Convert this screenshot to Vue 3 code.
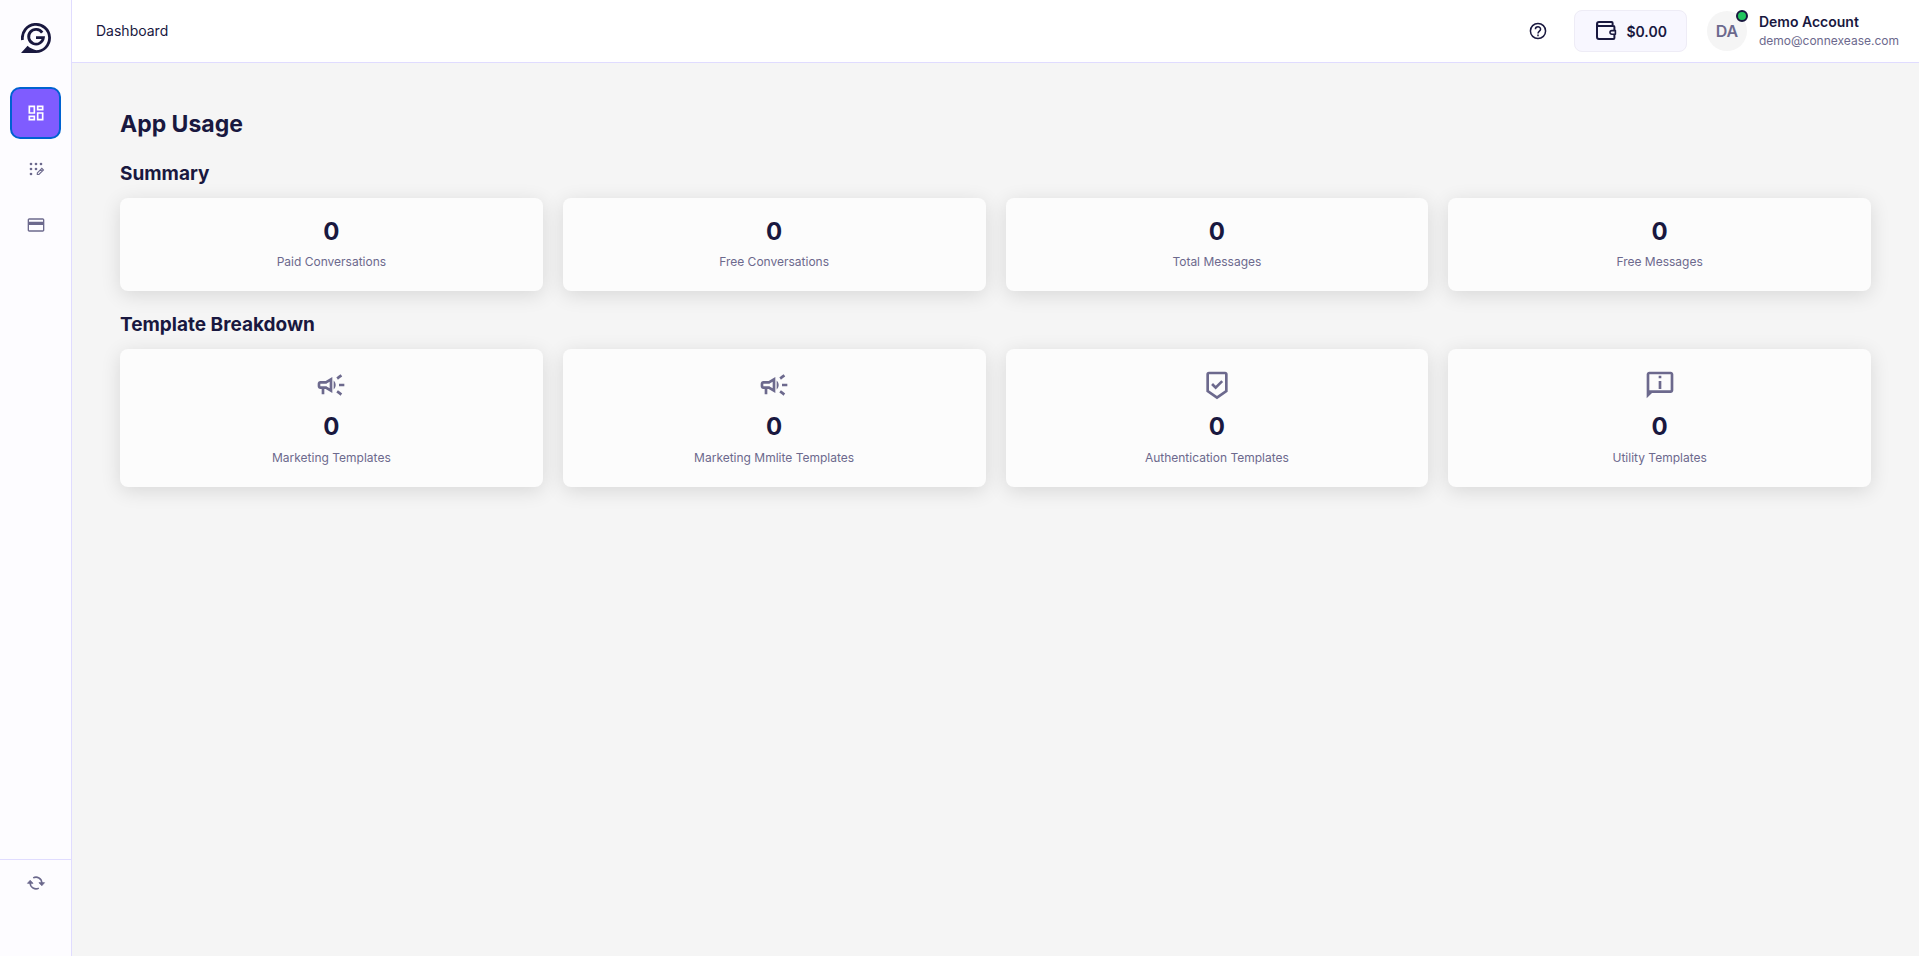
<script setup>
import { ref } from 'vue'

const active = ref('dashboard')

const user = {
  name: 'Demo Account',
  email: 'demo@connexease.com',
  initials: 'DA',
  balance: 0,
}

const summary = ref([
  { label: 'Paid Conversations', value: 0 },
  { label: 'Free Conversations', value: 0 },
  { label: 'Total Messages', value: 0 },
  { label: 'Free Messages', value: 0 },
])

const templates = ref([
  { label: 'Marketing Templates', value: 0, icon: 'campaign' },
  { label: 'Marketing Mmlite Templates', value: 0, icon: 'campaign' },
  { label: 'Authentication Templates', value: 0, icon: 'badge' },
  { label: 'Utility Templates', value: 0, icon: 'info' },
])
</script>

<template>
  <div class="layout">
    <aside class="sidebar">
      <a href="#" class="logo" aria-label="Home">
        <svg viewBox="0 0 30 30" width="30" height="30">
          <path d="M1.5 17A13.6 13.6 0 1 1 15 28.6H8" fill="none" stroke="currentColor" stroke-width="2.8" />
          <path d="M0 30l6.6-7.2c2 2 4.6 3.4 8.4 4.4V30z" fill="currentColor" />
          <path d="M21.2 9.6A7.4 7.4 0 1 0 22.4 14.6H15" fill="none" stroke="currentColor" stroke-width="2.8" />
        </svg>
      </a>

      <nav class="nav">
        <button class="nav-btn" :class="{ active: active === 'dashboard' }" aria-label="Dashboard" @click="active = 'dashboard'">
          <svg viewBox="0 0 24 24" width="20" height="20" fill="currentColor">
            <path d="M19 5v2h-4V5h4M9 5v6H5V5h4m10 8v6h-4v-6h4M9 17v2H5v-2h4M21 3h-8v6h8V3zM11 3H3v10h8V3zm10 8h-8v10h8V11zm-10 4H3v6h8v-6z" />
          </svg>
        </button>
        <button class="nav-btn" :class="{ active: active === 'apps' }" aria-label="Apps" @click="active = 'apps'">
          <svg viewBox="0 0 24 24" width="20" height="20" fill="currentColor">
            <circle cx="6" cy="6" r="1.6" />
            <circle cx="12" cy="6" r="1.6" />
            <circle cx="18" cy="6" r="1.6" />
            <circle cx="6" cy="12" r="1.6" />
            <circle cx="12" cy="12" r="1.6" />
            <circle cx="6" cy="18" r="1.6" />
            <path d="M13.6 18.6v-1.9l5.4-5.4 1.9 1.9-5.4 5.4zM17.4 12.9l1.9 1.9" fill="none" stroke="currentColor" stroke-width="1.4" />
          </svg>
        </button>
        <button class="nav-btn" :class="{ active: active === 'billing' }" aria-label="Billing" @click="active = 'billing'">
          <svg viewBox="0 0 24 24" width="20" height="20" fill="currentColor">
            <path d="M20 4H4c-1.11 0-1.99.89-1.99 2L2 18c0 1.11.89 2 2 2h16c1.11 0 2-.89 2-2V6c0-1.11-.89-2-2-2zm.4 14.4H3.6V12h16.8v6.4zm0-10.4H3.6V5.6h16.8V8z" />
          </svg>
        </button>
      </nav>

      <div class="sidebar-foot">
        <button class="nav-btn small" aria-label="Refresh">
          <svg viewBox="0 0 24 24" width="20" height="20">
            <path d="M8.6 5.9A7 7 0 0 1 19 12M15.4 18.1A7 7 0 0 1 5 12" fill="none" stroke="currentColor" stroke-width="1.8" />
            <path d="M15.6 11.6h6.6L19 15.2zM8.4 12.4H1.8L5 8.8z" fill="currentColor" stroke="currentColor" stroke-linejoin="round" />
          </svg>
        </button>
      </div>
    </aside>

    <div class="content">
      <header class="topbar">
        <span class="page-name">Dashboard</span>
        <div class="topbar-right">
          <button class="help" aria-label="Help">
            <svg viewBox="0 0 24 24" width="20" height="20" fill="none" stroke="currentColor" stroke-width="1.8">
              <circle cx="12" cy="12" r="9.1" />
              <path d="M8.9 10a3.1 3.1 0 0 1 6.2 0c0 2.2-3.1 2.3-3.1 5" />
              <path d="M12 16.2v2" />
            </svg>
          </button>
          <button class="wallet">
            <svg viewBox="0 0 24 24" width="24" height="24" fill="none" stroke="currentColor" stroke-width="2">
              <path d="M18.6 6.5V4a1 1 0 0 0-1-1H5a2 2 0 0 0 0 4h14.4a1 1 0 0 1 1 1v3M3 5.4V18a2 2 0 0 0 2 2h14.4a1 1 0 0 0 1-1v-3" />
              <path d="M21.4 11.6h-3.6a1.8 1.8 0 0 0 0 3.6h3.6z" stroke-width="1.6" stroke-linejoin="round" />
            </svg>
            <span>${{ user.balance.toFixed(2) }}</span>
          </button>
          <div class="account">
            <div class="avatar">
              {{ user.initials }}
              <i class="status"></i>
            </div>
            <div class="account-info">
              <span class="account-name">{{ user.name }}</span>
              <span class="account-email">{{ user.email }}</span>
            </div>
          </div>
        </div>
      </header>

      <main class="main">
        <h1>App Usage</h1>

        <section>
          <h2>Summary</h2>
          <div class="cards">
            <div v-for="item in summary" :key="item.label" class="card">
              <span class="value">{{ item.value }}</span>
              <span class="label">{{ item.label }}</span>
            </div>
          </div>
        </section>

        <section>
          <h2>Template Breakdown</h2>
          <div class="cards">
            <div v-for="item in templates" :key="item.label" class="card">
              <svg class="card-icon" viewBox="0 0 24 24" width="32" height="32" fill="currentColor">
                <path v-if="item.icon === 'campaign'" d="M18 11v2h4v-2h-4zM16 17.61c.96.71 2.21 1.65 3.2 2.39.4-.53.8-1.07 1.2-1.6-.99-.74-2.24-1.68-3.2-2.4-.4.54-.8 1.08-1.2 1.61zM20.4 5.6c-.4-.53-.8-1.07-1.2-1.6-.99.74-2.24 1.68-3.2 2.4.4.53.8 1.07 1.2 1.6.96-.72 2.21-1.65 3.2-2.4zM4 9c-1.1 0-2 .9-2 2v2c0 1.1.9 2 2 2h1v4h2v-4h1l5 3V6L8 9H4zm5.03 1.71L11 9.53v4.94l-1.97-1.18-.48-.29H4v-2h4.55l.48-.29zM15.5 12c0-1.33-.58-2.53-1.5-3.35v6.69c.92-.81 1.5-2.01 1.5-3.34z" />
                <g v-else-if="item.icon === 'badge'" fill="none" stroke="currentColor" stroke-width="2">
                  <path d="M6 3h12a1 1 0 0 1 1 1v12.5l-7 5-7-5V4a1 1 0 0 1 1-1z" />
                  <path d="M8.3 11.3l2.7 2.7 4.9-4.9" />
                </g>
                <path v-else d="M20 2H4c-1.1 0-2 .9-2 2v18l4-4h14c1.1 0 2-.9 2-2V4c0-1.1-.9-2-2-2zm0 14H4V4h16v12zM11 9h2v6h-2zM11 5h2v2h-2z" />
              </svg>
              <span class="value">{{ item.value }}</span>
              <span class="label">{{ item.label }}</span>
            </div>
          </div>
        </section>
      </main>
    </div>
  </div>
</template>

<style>
body { background: #f5f5f5; }
</style>

<style scoped>
* { box-sizing: border-box; }

.layout {
  display: flex; min-height: 100vh;
  font-family: Inter, "Liberation Sans", sans-serif; color: #19183f;
}
button { font: inherit; color: inherit; border: none; background: none; padding: 0; cursor: pointer; }
svg { display: block; }

.sidebar {
  width: 72px; flex-shrink: 0; background: #fdfcff;
  border-right: 1px solid #e0dcff;
  display: flex; flex-direction: column; align-items: center; padding-top: 23px;
}
.logo { color: inherit; margin-bottom: 34px; }
.nav { display: flex; flex-direction: column; gap: 4px; }
.nav-btn {
  width: 51px; height: 52px; border-radius: 10px; color: #6c698d;
  display: flex; align-items: center; justify-content: center;
}
.nav-btn.active { background: #7f5cff; border: 2px solid #0062d1; color: #fff; }
.nav-btn.small { height: 46px; }
.sidebar-foot {
  margin-top: auto; align-self: stretch; border-top: 1px solid #e0dcff;
  display: flex; justify-content: center; padding-bottom: 50px;
}

.content { flex: 1; min-width: 0; }
.topbar {
  height: 63px; background: #fff; border-bottom: 1px solid #e0dcff; padding: 0 20px 0 24px;
  display: flex; align-items: center; justify-content: space-between;
}
.page-name { font-size: 14px; line-height: 20px; }
.topbar-right { display: flex; align-items: center; }
.help { margin-right: 26px; }
.wallet {
  height: 42px; padding: 0 19px; border: 1px solid #eeecf6; border-radius: 8px;
  background: #f8f7ff; font-size: 14px; font-weight: 600;
  display: flex; align-items: center; gap: 8px; margin-right: 20px;
}
.account { display: flex; align-items: center; gap: 12px; }
.avatar {
  position: relative; width: 40px; height: 40px; border-radius: 50%; background: #f5f5f5;
  display: flex; align-items: center; justify-content: center;
  font-size: 16px; font-weight: 600; color: #6c698d;
}
.status {
  position: absolute; top: -1px; right: -1px; width: 12px; height: 12px;
  border-radius: 50%; background: #22c55e; border: 2px solid #19183f;
}
.account-info { display: flex; flex-direction: column; }
.account-name { font-size: 14px; line-height: 20px; font-weight: 600; }
.account-email { font-size: 12px; line-height: 18px; color: #6c698d; }

.main { padding: 48px; }
h1 { font-size: 23px; line-height: 27px; font-weight: 700; margin: 0 0 24px; }
h2 { font-size: 19px; line-height: 24px; font-weight: 700; margin: 0 0 12px; }
section + section { margin-top: 22px; }

.cards { display: grid; grid-template-columns: repeat(4, 1fr); gap: 20px; }
.card {
  background: #fcfcfc; border-radius: 8px; padding: 20px;
  box-shadow: 0 4px 20px rgba(0, 0, 0, 0.12);
  display: flex; flex-direction: column; align-items: center;
}
.card-icon { color: #6c698d; margin-bottom: 12px; }
.value { font-size: 24px; line-height: 27px; font-weight: 700; margin-bottom: 8px; }
.card-icon + .value { margin-bottom: 9px; }
.label { font-size: 12px; line-height: 18px; color: #6c698d; }
</style>
